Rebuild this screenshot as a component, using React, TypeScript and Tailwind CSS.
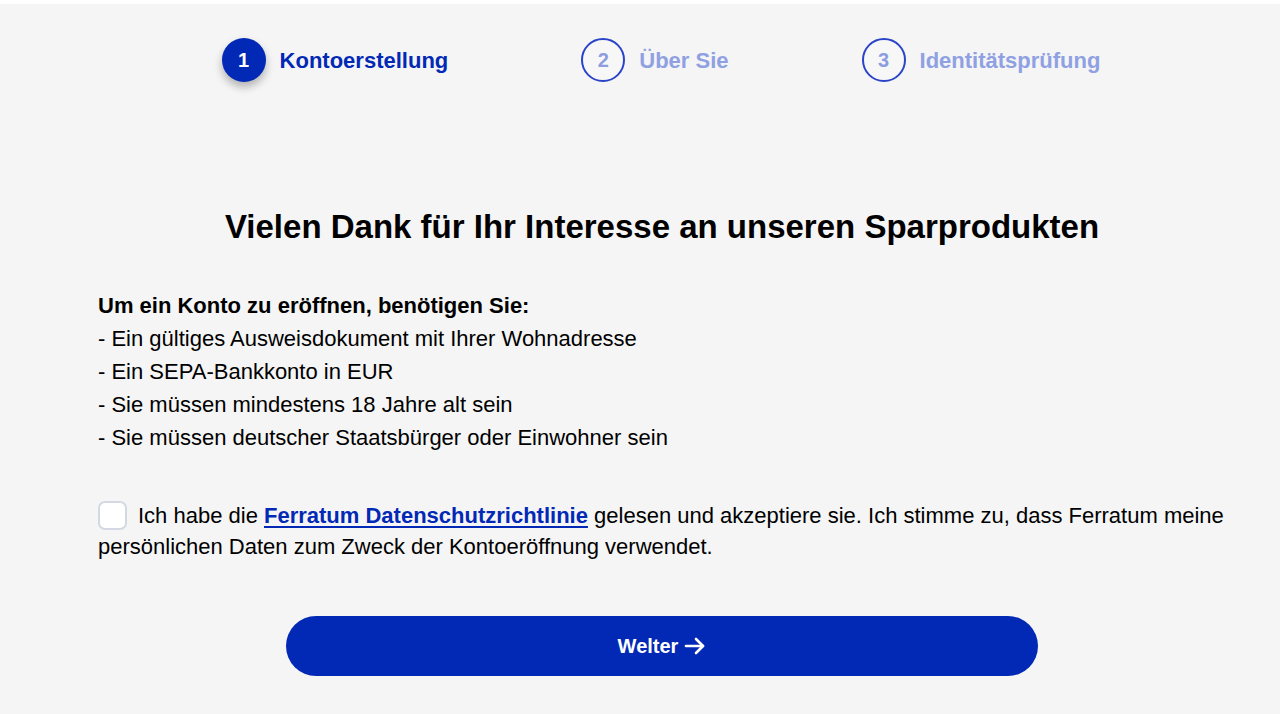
import React from "react";

function Step({ n, label, active }: { n: number; label: string; active?: boolean }) {
  return (
    <div className="flex items-center gap-[14px]">
      {active ? (
        <div className="w-[44px] h-[44px] rounded-full bg-[#0229b6] text-white flex items-center justify-center text-[20px] font-bold shadow-[0_5px_8px_rgba(0,0,0,0.28)]">
          {n}
        </div>
      ) : (
        <div className="w-[44px] h-[44px] rounded-full border-2 border-[#2a44c8] bg-[#f7f7f7] text-[#8c9de0] flex items-center justify-center text-[20px] font-bold">
          {n}
        </div>
      )}
      <span className={"text-[22px] font-bold " + (active ? "text-[#0229b6]" : "text-[#8fa1e2]")}>{label}</span>
    </div>
  );
}

export default function App() {
  return (
    <div
      className="w-[1280px] h-[714px] bg-white overflow-hidden"
      style={{ fontFamily: '"Liberation Sans", Arial, sans-serif' }}
    >
      <div className="mt-[4px] h-[710px] bg-[#f5f5f5] flex flex-col">
        <div className="pt-[34px] flex justify-center pl-[42px] gap-[133px]">
          <Step n={1} label="Kontoerstellung" active />
          <Step n={2} label="Über Sie" />
          <Step n={3} label="Identitätsprüfung" />
        </div>

        <div className="pl-[98px] w-[1226px] text-black">
          <h1 className="mt-[125px] text-center text-[33px] leading-[40px] font-bold">
            Vielen Dank für Ihr Interesse an unseren Sparprodukten
          </h1>
          <div className="mt-[42px] text-[22px] leading-[33px]">
            <p className="font-bold">Um ein Konto zu eröffnen, benötigen Sie:</p>
            <p>- Ein gültiges Ausweisdokument mit Ihrer Wohnadresse</p>
            <p>- Ein SEPA-Bankkonto in EUR</p>
            <p>- Sie müssen mindestens 18 Jahre alt sein</p>
            <p>- Sie müssen deutscher Staatsbürger oder Einwohner sein</p>
          </div>
          <div className="mt-[46px] text-[22px] leading-[31px] relative">
            <span className="inline-block align-middle w-[29px] h-[29px] rounded-[7px] border-2 border-[#d4d8e2] bg-white mr-[11px] -mt-[4px]"></span>
            Ich habe die{" "}
            <a href="#" className="text-[#0229b6] font-bold underline underline-offset-[3px]">
              Ferratum Datenschutzrichtlinie
            </a>{" "}
            gelesen und akzeptiere sie. Ich stimme zu, dass Ferratum meine persönlichen Daten zum Zweck der Kontoeröffnung verwendet.
          </div>
          <div className="mt-[54px] flex justify-center">
            <button className="w-[752px] h-[60px] rounded-full bg-[#0229b6] text-white text-[20px] font-bold flex items-center justify-center gap-[6px]">
              Welter
              <svg width="22" height="20" viewBox="0 0 22 20" fill="none" stroke="white" strokeWidth="2.6" strokeLinecap="round" strokeLinejoin="round">
                <path d="M2 10h17" />
                <path d="M12 3l7 7-7 7" />
              </svg>
            </button>
          </div>
        </div>
      </div>
    </div>
  );
}
